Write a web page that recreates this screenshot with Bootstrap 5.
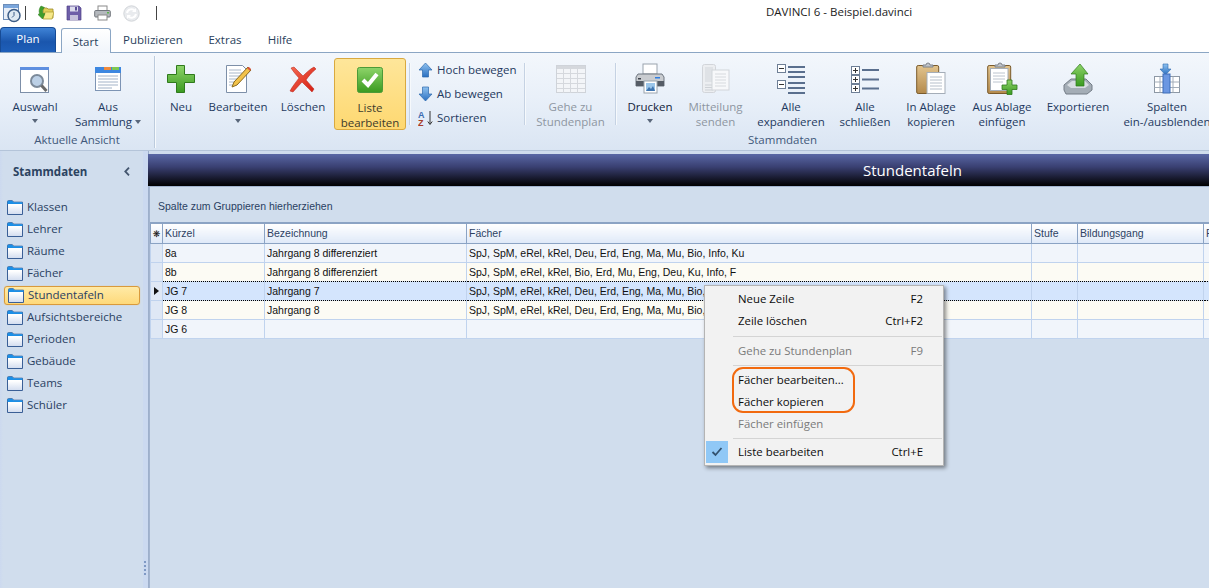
<!DOCTYPE html>
<html lang="de"><head><meta charset="utf-8"><title>DAVINCI 6</title>
<link href="https://cdn.jsdelivr.net/npm/bootstrap@5.3.0/dist/css/bootstrap.min.css" rel="stylesheet">
<script src="https://cdn.jsdelivr.net/npm/bootstrap@5.3.0/dist/js/bootstrap.bundle.min.js"></script>
<style>
html,body{height:100%}
body{width:1209px;height:588px;overflow:hidden;background:#fff;font-family:"Open Sans","Noto Sans",sans-serif;font-size:11.5px;color:#1f3a60;position:relative}
.qat{height:28px;padding:0 0 2px 2px}
.qsep{width:1px;height:14px;background:#444}
.qs1{margin-left:-5px}
.wintitle{position:absolute;left:0;right:0;top:4px;font-size:11.5px;color:#1c1c1c;padding-left:766px;line-height:16px}
.tabrow{height:25px;font-size:11.5px}
.tplan{width:56px;height:26px;background:linear-gradient(#3f83d6,#1a56ad 55%,#1f60ba);border:1px solid #174b95;border-bottom:0;border-radius:4px 4px 0 0;color:#fff;text-align:center;line-height:21px}
.tstart{width:50px;height:25px;margin-left:5px;background:linear-gradient(#fff,#f0f5fb);border:1px solid #8ba6c4;border-bottom:0;border-radius:3px 3px 0 0;text-align:center;line-height:26px;position:relative;z-index:2;color:#2a3f5c;padding-right:1px}
.tplain{text-align:center;line-height:26px;color:#2a3f5c}
.tw1{width:84px}.tw2{width:60px}.tw3{width:50px}
.ribbon{height:99px;border-top:1px solid #8ba6c4;background:linear-gradient(#f3f7fc,#e9f0f9 45%,#dae5f3);border-bottom:1px solid #b4c4d9;overflow:hidden;margin-top:-1px;position:relative}
.rgroup{flex:0 0 auto;height:100%;position:relative}
.g1{width:154px}.g2{width:1253px}
.gedge{width:2px;height:92px;margin-top:3px;background:linear-gradient(90deg,#bccbdd 50%,#f7fafd 50%);flex:0 0 auto}
.rbtn{flex:0 0 auto;height:72px;margin-top:5px;text-align:center;line-height:15px;display:flex;flex-direction:column;align-items:center}
.ibox{height:41px;display:flex;align-items:center;justify-content:center;flex:0 0 auto}
.rbtn.off{color:#8e96a1}
.rbtn.dark{color:#12233b}
.rbtn.on{background:linear-gradient(#fee69a,#fed871);border:1px solid #d9a93f;border-radius:3px;color:#3c3a2c}
.w46{width:46px}.w62{width:62px}.w65{width:65px}.w66{width:66px}.w68{width:68px}.w70{width:70px}.w72{width:72px}.w76{width:76px}.w80{width:80px}.w86{width:86px}.w89{width:89px}.w98{width:98px}
.gname{position:absolute;left:0;right:0;top:79px;text-align:center;line-height:16px;color:#41587a}
.rsep{width:2px;height:62px;margin-top:10px;background:linear-gradient(90deg,#c5d2e3 50%,#f6f9fc 50%);flex:0 0 auto}
.gap2{margin-left:2px}
.gap3{margin-left:3px}
.minicol{width:113px;padding:5px 0 0 7px;flex:0 0 auto}
.mini{height:24px;line-height:20px;display:flex;gap:4px;align-items:center}
.tri{display:block;width:0;height:0;border:3.5px solid transparent;border-top:4px solid #59667a;border-bottom:0;margin:5px auto 0}
.tri.inl{display:inline-block;margin:0 0 2px 3px}
.mainrow{height:437px;background:#d0dded}
.side{width:149px;flex:0 0 auto;position:relative;background:linear-gradient(90deg,#ccd9ef 0,#d0dded 3px)}
.sidehead{height:41px;padding:8px 19px 0 13px;font-weight:700;font-size:11.5px;line-height:18px;color:#2c4361}
.sideitem{height:22px;display:flex;align-items:center;gap:4px;padding-left:7px;font-size:11.5px;line-height:16px;color:#2a3f62}
.sideitem.act{margin:1.5px 9px 1.5px 4px;padding-left:3px;background:linear-gradient(#ffeaa6,#fed97a);border:1px solid #d99a3c;border-radius:3px;height:19px;box-shadow:0 0 1px #e4b765}
.splitter{position:absolute;right:0;top:0;bottom:0;width:6px;background:#cbd9f0;border-right:1px solid #9dafcb}
.gripdot{position:absolute;left:1px;top:410px;width:2px;height:2px;background:#7f99c4;box-shadow:0 4px 0 #7f99c4,0 8px 0 #7f99c4,0 12px 0 #7f99c4}
.content{flex:1 1 auto;min-width:0;overflow:hidden;margin-left:-1px}
.band{height:32px;background:linear-gradient(#5a68a5,#3a4072 40%,#000);color:#fff;font-size:15px;line-height:32px;text-align:center;padding-left:468px;position:relative;z-index:3;margin-top:3px;white-space:nowrap}
.panelwrap{height:402px;overflow:hidden;border-top:1px solid #a3b4cf;margin-left:1px;border-left:1px solid #a3b4cf}
.grouphint{height:35px;padding:11px 0 0 8px;font:10.5px/16px "Liberation Sans",sans-serif;color:#2a3f62}
.table.gridtbl{table-layout:fixed;width:1260px;margin:0;border-collapse:collapse;font:10.5px/14px "Liberation Sans",sans-serif;border-top:2px solid #8ba3c4}
.table.gridtbl>:not(caption)>*>*{padding:0 2px;height:19px;border:1px solid #c0d3ee;box-shadow:none;white-space:nowrap;overflow:hidden;color:#111;background:#f1f5fb;vertical-align:middle}
.table.gridtbl>thead>*>*{height:20px;background:linear-gradient(#fff,#dfe9f8);border:1px solid #8ba3c4;border-top:0;font-weight:400;color:#2d4263}
.table.gridtbl>tbody>.ry>*{background:#fcfbf4}
.table.gridtbl>tbody>.rs>*{background:#d4e5fd;border-top:1px dotted #000;border-bottom:1px dotted #000}
.table.gridtbl>tbody>tr:has(+.rs)>*{border-bottom:0}
.table.gridtbl>tbody>.rs+tr>*{border-top:0}
.table.gridtbl>thead>*>.ind{padding:0;text-align:center}
.table.gridtbl>tbody>*>.ind,.table.gridtbl>tbody>.rs>.ind,.table.gridtbl>tbody>.ry>.ind{background:#dfe8f5;padding:0;text-align:center;border:1px solid #c0d3ee}
.starmark{font:9px/12px "DejaVu Sans",sans-serif;color:#111}
.c0{width:12px}.c1{width:102px}.c2{width:202px}.c3{width:565px}.c4{width:46px}.c5{width:126px}.c6{width:207px}
.ctx{position:absolute;left:704px;top:285px;width:240px;height:181px;background:#f2f2f2;border:1px solid #b4b4b4;box-shadow:2px 2px 4px rgba(0,0,0,.45);color:#0c0c0c;font-size:11.4px;z-index:5;padding-top:2px}
.ci{height:22px;line-height:22px;padding:0 20px 0 33px;display:flex;justify-content:space-between;position:relative}
.ci.dis{color:#7a7a7a}
.csep{height:1px;background:#d4d4d4;margin:3.5px 1px 3.5px 28px}
.csep2{margin:3px 1px 3px 28px}
.csep3{margin:3px 1px 2px 28px}
.chk{position:absolute;left:1px;top:0;width:22px;height:22px;background:#90c8f6;display:flex;align-items:center;justify-content:center}
.mark-oval{position:absolute;left:732px;top:367px;width:123px;height:46px;border:2px solid #f26a0f;border-radius:11px;z-index:6}
</style></head>
<body>
<svg width="0" height="0" class="position-absolute"><defs>
<symbol id="fold" viewBox="0 0 16 15"><path d="M.5 3V1.500Q.5.700 1.300.700H5Q6 .700 6.300 2.200H15.500V14.500H.5Z" fill="#fff" stroke="#3a5f96"/><path d="M.5 3V1.500Q.5.700 1.300.700H5Q6 .700 6.300 2.200H15.500V4H.5Z" fill="#1c8fe6"/><path d="M1 5h14v9H1z" fill="url(#fg)"/></symbol>
<linearGradient id="fg" x1="0" y1="0" x2="0" y2="1"><stop offset="0" stop-color="#fff"/><stop offset="1" stop-color="#d4def0"/></linearGradient>
<linearGradient id="gg" x1="0" y1="0" x2="0" y2="1"><stop offset="0" stop-color="#8ed46a"/><stop offset="1" stop-color="#3a9a20"/></linearGradient>
<linearGradient id="rg" x1="0" y1="0" x2="1" y2="1"><stop offset="0" stop-color="#f56a52"/><stop offset="1" stop-color="#d41a10"/></linearGradient>
<linearGradient id="bg" x1="0" y1="0" x2="0" y2="1"><stop offset="0" stop-color="#8fc2f0"/><stop offset="1" stop-color="#2a6fc0"/></linearGradient>
<linearGradient id="tg" x1="0" y1="0" x2="0" y2="1"><stop offset="0" stop-color="#e2c48e"/><stop offset="1" stop-color="#b48a4c"/></linearGradient>
</defs></svg>

<div class="qat d-flex align-items-center gap-2">
<svg width="20" height="20" viewBox="0 0 20 20"><rect x="1.500" y="1.500" width="15" height="15" fill="#e8eef7" stroke="#6d8db8"/><rect x="2" y="2" width="14" height="3" fill="#7aa6dc"/><circle cx="12" cy="12.500" r="6" fill="#dfe9f2" stroke="#3c5c86" stroke-width="1.500"/><path d="M12 9v3.500l-2 2" stroke="#3c5c86" fill="none"/></svg>
<span class="qsep qs1"></span>
<svg class="ms-1" width="16" height="16" viewBox="0 0 16 16"><path d="M5 3h4l1 1h5v9H5z" fill="#e3cf5a" stroke="#9c8a2a" stroke-width=".8"/><path d="M5 14l2-7h9l-2 7z" fill="#f6e88a" stroke="#b3a23a" stroke-width=".8"/><path d="M3 1c-1.500 2-2.500 4.500-1.500 7.500L0 9.500 4.500 14 7 8.500l-2 .3C4 6.500 4.500 4 6.500 2.500z" fill="#3f9e2c" stroke="#2b7a1c" stroke-width=".5"/></svg>
<svg class="ms-1" width="16" height="16" viewBox="0 0 16 16"><path d="M1 1h12l2 2v12H1z" fill="#6e5fa8" stroke="#4d4188" stroke-width=".7"/><rect x="4" y="1.500" width="8" height="5" fill="#dcdcec"/><rect x="4" y="10" width="8" height="5" fill="#c6c2dc"/><rect x="9" y="2" width="2" height="3.500" fill="#5a4e96"/></svg>
<svg class="ms-1" width="17" height="16" viewBox="0 0 17 16"><rect x="4" y="1" width="9" height="5" fill="#fff" stroke="#8a8a8a"/><rect x=".7" y="5.500" width="15.600" height="6.500" rx="1" fill="#b4b8bd" stroke="#71767c"/><rect x="4" y="10" width="9" height="5" fill="#fff" stroke="#8a8a8a"/><rect x="13" y="7" width="2" height="1.500" fill="#59b34a"/></svg>
<svg class="ms-1" width="17" height="17" viewBox="0 0 17 17"><circle cx="8.500" cy="8.500" r="7.700" fill="#e9ebee" stroke="#d2d5d9"/><path d="M4 8a4.500 4.500 0 0 1 8-2M13 9a4.500 4.500 0 0 1-8 2" stroke="#fff" stroke-width="2" fill="none"/><path d="M13 3v4h-4zM4 14v-4h4z" fill="#fff"/></svg>
<span class="qsep ms-2"></span>
</div>
<div class="wintitle">DAVINCI 6 - Beispiel.davinci</div>

<div class="tabrow d-flex align-items-end">
<div class="tplan">Plan</div>
<div class="tstart">Start</div>
<div class="tplain tw1">Publizieren</div>
<div class="tplain tw2">Extras</div>
<div class="tplain tw3">Hilfe</div>
</div>

<div class="ribbon d-flex">
<div class="rgroup g1 d-flex">
 <div class="rbtn w70"><div class="ibox"><svg width="32" height="30" viewBox="0 0 32 30"><rect x="1.500" y="3.500" width="28" height="25" fill="#fff" stroke="#7d8fa8"/><rect x="1" y="3" width="29" height="3" fill="#5e8fe0"/><circle cx="18" cy="17" r="6" fill="#bcd0e6" stroke="#7c8a9a" stroke-width="2"/><path d="M22.500 21.500l5 5.500" stroke="#6a6a6a" stroke-width="3"/></svg></div>Auswahl<span class="tri"></span></div>
 <div class="rbtn w76"><div class="ibox"><svg width="28" height="28" viewBox="0 0 28 28"><rect x="1.500" y="2.500" width="25" height="23" fill="#fff" stroke="#7d94b4"/><rect x="1" y="2" width="26" height="4" fill="#3d87e0"/><rect x="10" y="2" width="7" height="3" fill="#f08a3c"/><rect x="18" y="2" width="7" height="3" fill="#7ec850"/><rect x="1" y="6" width="26" height="2" fill="#3d87e0"/><path d="M4 11h20M4 14h20M4 17h20M4 20h20M4 23h14" stroke="#a3b3c8"/></svg></div>Aus<div>Sammlung<span class="tri inl"></span></div></div>
 <div class="gname">Aktuelle Ansicht</div>
</div>
<div class="gedge"></div>
<div class="rgroup g2 d-flex">
 <div class="gname">Stammdaten</div>
 <div class="rbtn w46 gap2"><div class="ibox"><svg width="30" height="30" viewBox="0 0 30 30"><path d="M10.500 1.500h8v9h10v8h-10v10h-8v-10h-9v-8h9z" fill="url(#gg)" stroke="#2f7a1c"/></svg></div>Neu</div>
 <div class="rbtn w68"><div class="ibox"><svg width="28" height="30" viewBox="0 0 28 30"><path d="M2.500 1.500h16l4 4v23h-20z" fill="#fff" stroke="#7d8fa8"/><path d="M5 6h12M5 9h13M5 12h13M5 15h10M5 18h8M5 21h6" stroke="#a9b7ca"/><path d="M24 3l3 3-14 15-5 2 2-5z" fill="#f2c24a" stroke="#8a6a20"/><path d="M23 4l3 3 1-2-2-2z" fill="#d9533e"/></svg></div>Bearbeiten<span class="tri"></span></div>
 <div class="rbtn w62"><div class="ibox"><svg width="28" height="28" viewBox="0 0 28 28"><path d="M2 3l3-1c3 3 6 6 9 9 3-3 7-7 11-9l2 2c-4 3-8 8-10 11 3 3 6 7 8 9l-2 3c-3-3-7-7-10-10-3 3-6 7-9 10l-3-1c2-4 6-9 9-13C7 10 4 6 2 3z" fill="url(#rg)" stroke="#b61c10" stroke-width=".5"/></svg></div>Löschen</div>
 <div class="rbtn on w72"><div class="ibox"><svg width="28" height="28" viewBox="0 0 28 28"><rect x="1.500" y="1.500" width="25" height="25" rx="2" fill="url(#gg)" stroke="#4c9a38"/><path d="M7 14l5 5 9-11" stroke="#fff" stroke-width="4" fill="none"/></svg></div>Liste<div>bearbeiten</div></div>
 <div class="rsep gap3"></div>
 <div class="minicol">
  <div class="mini"><svg width="15" height="16" viewBox="0 0 15 16"><path d="M7.500 1L14 8h-3.500v7h-6V8H1z" fill="url(#bg)" stroke="#2d68ae" stroke-width=".7"/></svg>Hoch bewegen</div>
  <div class="mini"><svg width="15" height="16" viewBox="0 0 15 16"><path d="M7.500 15L14 8h-3.500V1h-6v7H1z" fill="url(#bg)" stroke="#2d68ae" stroke-width=".7"/></svg>Ab bewegen</div>
  <div class="mini"><svg width="15" height="16" viewBox="0 0 15 16"><text x="0" y="7.500" font-family="Liberation Sans" font-weight="700" font-size="9" fill="#3b6bb0">A</text><text x="0" y="15.500" font-family="Liberation Sans" font-weight="700" font-size="9" fill="#a83c28">Z</text><path d="M12 1v13M9.800 11.500l2.200 3 2.200-3" stroke="#333" fill="none"/></svg>Sortieren</div>
 </div>
 <div class="rsep"></div>
 <div class="rbtn off w89"><div class="ibox"><svg width="30" height="28" viewBox="0 0 30 28"><rect x=".5" y=".5" width="29" height="27" fill="#f3f5f8" stroke="#cfd3d9"/><rect x="1" y="1" width="28" height="3" fill="#d5d8dd"/><path d="M1 8.500h28M1 13.500h28M1 18.500h28M1 23.500h28M7.500 4v24M14.500 4v24M21.500 4v24" stroke="#d5d8dd"/></svg></div>Gehe zu<div>Stundenplan</div></div>
 <div class="rsep"></div>
 <div class="rbtn dark w66"><div class="ibox"><svg width="30" height="31" viewBox="0 0 30 31"><rect x="8" y="1" width="14" height="10" fill="#fff" stroke="#9aa3ad"/><path d="M3 11h24l2 3v9H1v-9z" fill="#c9ccd0" stroke="#6f7680"/><rect x="1" y="18" width="28" height="5" fill="#555c66"/><rect x="3" y="15" width="3" height="1.500" fill="#3d424a"/><rect x="20" y="14" width="5" height="1.500" fill="#2e7de0"/><rect x="9" y="18" width="13" height="12" fill="#fff" stroke="#9aa3ad"/><rect x="11" y="20" width="9" height="8" fill="#9cc6ea"/><path d="M11 28l3-4 2 2 2-3 2 5z" fill="#3f75b0"/></svg></div>Drucken<span class="tri"></span></div>
 <div class="rbtn off w65"><div class="ibox"><svg width="28" height="30" viewBox="0 0 28 30"><rect x=".5" y=".5" width="13" height="28" rx="2" fill="#eceef1" stroke="#d2d5da"/><path d="M3 3h8v15H3z" fill="#dfe2e6"/><path d="M3 21h8M3 23.500h8M3 26h8" stroke="#cdd1d6"/><rect x="10" y="6" width="17" height="20" fill="#f7f8fa" stroke="#d2d5da"/><path d="M13 10h11M13 13h11M13 16h11M13 19h11M13 22h11" stroke="#d7dade"/></svg></div>Mitteilung<div>senden</div></div>
 <div class="rbtn w86"><div class="ibox"><svg width="28" height="30" viewBox="0 0 28 30"><rect x=".5" y=".5" width="8" height="8" fill="#fff" stroke="#6e7f96"/><path d="M2 4.500h5" stroke="#333"/><path d="M11 3h17M11 8h17M11 13h17" stroke="#5a6f8e" stroke-width="2"/><rect x=".5" y="16.500" width="8" height="8" fill="#fff" stroke="#6e7f96"/><path d="M2 20.500h5" stroke="#333"/><path d="M11 19h17M11 24h17M11 29h17" stroke="#5a6f8e" stroke-width="2"/></svg></div>Alle<div>expandieren</div></div>
 <div class="rbtn w62"><div class="ibox"><svg width="28" height="28" viewBox="0 0 28 28"><g fill="#fff" stroke="#6e7f96"><rect x=".5" y="1.500" width="8" height="8"/><rect x=".5" y="10.500" width="8" height="8"/><rect x=".5" y="19.500" width="8" height="8"/></g><path d="M2 5.500h5M4.500 3v5M2 14.500h5M4.500 12v5M2 23.500h5M4.500 21v5" stroke="#333"/><path d="M11 5h17M11 14.500h17M11 23.500h17" stroke="#5a6f8e" stroke-width="2"/></svg></div>Alle<div>schließen</div></div>
 <div class="rbtn w70"><div class="ibox"><svg width="30" height="33" viewBox="0 0 30 33"><rect x=".7" y="3.500" width="22" height="28" rx="1.500" fill="url(#tg)" stroke="#7a5a2a"/><path d="M7 5V3h3a2 2 0 0 1 4 0h3v2z" fill="#bfc3c9" stroke="#7d8289"/><rect x="11" y="10.500" width="18" height="21" fill="#fff" stroke="#a4adb8"/><path d="M14 15h12M14 18h12M14 21h12M14 24h12M14 27h12" stroke="#b6bfca"/></svg></div>In Ablage<div>kopieren</div></div>
 <div class="rbtn w72"><div class="ibox"><svg width="31" height="33" viewBox="0 0 31 33"><rect x=".7" y="3.500" width="23" height="28" rx="1.500" fill="url(#tg)" stroke="#7a5a2a"/><rect x="3.500" y="6.500" width="17.500" height="22" fill="#fff" stroke="#a4adb8"/><path d="M6 11h12M6 14h12M6 17h12M6 20h10" stroke="#bcc4ce"/><path d="M8 5V3h3a2 2 0 0 1 4 0h3v2z" fill="#bfc3c9" stroke="#7d8289"/><path d="M20 18h5v5h5v4.500h-5v5h-5v-5h-5V23h5z" fill="url(#gg)" stroke="#2f7a1c" stroke-width=".8"/></svg></div>Aus Ablage<div>einfügen</div></div>
 <div class="rbtn w80"><div class="ibox"><svg width="30" height="32" viewBox="0 0 30 32"><path d="M1 22l7-6h15l6 6v5l-5 4H3l-2-4z" fill="#a4adb6" stroke="#747d87"/><path d="M4 22l5-4h13l4 4-4 3H8z" fill="#d8dde2"/><path d="M17 1l8 10h-4v12h-8V11H8z" fill="url(#gg)" stroke="#2f7a1c" stroke-width=".7"/></svg></div>Exportieren</div>
 <div class="rbtn w98"><div class="ibox"><svg width="26" height="31" viewBox="0 0 26 31"><path d="M9 1h5v5h3l-5.500 6L6 6h3z" fill="url(#bg)" stroke="#2d68ae" stroke-width=".6"/><rect x=".5" y="13.500" width="25" height="16" fill="#fff" stroke="#8d98a5"/><path d="M.5 19h25M.5 24.500h25M6 13.500v16M19 13.500v16" stroke="#a3adb9"/><rect x="9" y="11" width="7" height="19" fill="#6b97e2" stroke="#3d6cb8"/></svg></div>Spalten<div class="text-nowrap">ein-/ausblenden</div></div>
</div>
</div>

<div class="mainrow d-flex">
<aside class="side">
 <div class="sidehead d-flex justify-content-between align-items-start mt-1"><span>Stammdaten</span><svg class="mt-1" width="6" height="9" viewBox="0 0 6 9"><path d="M5 .700L1.300 4.500 5 8.300" stroke="#44566f" stroke-width="1.800" fill="none"/></svg></div>
 <div class="sideitem"><svg width="16" height="15"><use href="#fold"/></svg>Klassen</div>
 <div class="sideitem"><svg width="16" height="15"><use href="#fold"/></svg>Lehrer</div>
 <div class="sideitem"><svg width="16" height="15"><use href="#fold"/></svg>Räume</div>
 <div class="sideitem"><svg width="16" height="15"><use href="#fold"/></svg>Fächer</div>
 <div class="sideitem act"><svg width="16" height="15"><use href="#fold"/></svg>Stundentafeln</div>
 <div class="sideitem"><svg width="16" height="15"><use href="#fold"/></svg>Aufsichtsbereiche</div>
 <div class="sideitem"><svg width="16" height="15"><use href="#fold"/></svg>Perioden</div>
 <div class="sideitem"><svg width="16" height="15"><use href="#fold"/></svg>Gebäude</div>
 <div class="sideitem"><svg width="16" height="15"><use href="#fold"/></svg>Teams</div>
 <div class="sideitem"><svg width="16" height="15"><use href="#fold"/></svg>Schüler</div>
 <div class="splitter"><span class="gripdot"></span></div>
</aside>
<section class="content">
 <div class="band">Stundentafeln</div>
 <div class="panelwrap">
 <div class="grouphint">Spalte zum Gruppieren hierherziehen</div>
 <table class="table gridtbl">
 <colgroup><col class="c0"><col class="c1"><col class="c2"><col class="c3"><col class="c4"><col class="c5"><col class="c6"></colgroup>
 <thead><tr><th class="ind"><span class="starmark">❋</span></th><th>Kürzel</th><th>Bezeichnung</th><th>Fächer</th><th>Stufe</th><th>Bildungsgang</th><th>F</th></tr></thead>
 <tbody>
 <tr><td class="ind"></td><td>8a</td><td>Jahrgang 8 differenziert</td><td>SpJ, SpM, eRel, kRel, Deu, Erd, Eng, Ma, Mu, Bio, Info, Ku</td><td></td><td></td><td></td></tr>
 <tr class="ry"><td class="ind"></td><td>8b</td><td>Jahrgang 8 differenziert</td><td>SpJ, SpM, eRel, kRel, Bio, Erd, Mu, Eng, Deu, Ku, Info, F</td><td></td><td></td><td></td></tr>
 <tr class="rs"><td class="ind"><svg width="5" height="8" viewBox="0 0 5 8" class="d-block mx-auto"><path d="M0 0l5 4-5 4z" fill="#111"/></svg></td><td>JG 7</td><td>Jahrgang 7</td><td>SpJ, SpM, eRel, kRel, Deu, Erd, Eng, Ma, Mu, Bio, Info, Ku</td><td></td><td></td><td></td></tr>
 <tr class="ry"><td class="ind"></td><td>JG 8</td><td>Jahrgang 8</td><td>SpJ, SpM, eRel, kRel, Deu, Erd, Eng, Ma, Mu, Bio, Info, Ku</td><td></td><td></td><td></td></tr>
 <tr><td class="ind"></td><td>JG 6</td><td></td><td></td><td></td><td></td><td></td></tr>
 </tbody></table>
 </div>
</section>
</div>

<div class="ctx">
 <div class="ci"><span>Neue Zeile</span><span>F2</span></div>
 <div class="ci"><span>Zeile löschen</span><span>Ctrl+F2</span></div>
 <div class="csep"></div>
 <div class="ci dis"><span>Gehe zu Stundenplan</span><span>F9</span></div>
 <div class="csep csep2"></div>
 <div class="ci"><span>Fächer bearbeiten...</span></div>
 <div class="ci"><span>Fächer kopieren</span></div>
 <div class="ci dis"><span>Fächer einfügen</span></div>
 <div class="csep csep3"></div>
 <div class="ci"><span class="chk"><svg width="12" height="10" viewBox="0 0 12 10"><path d="M1.500 5l3 3 6-7" stroke="#33526f" stroke-width="1.800" fill="none"/></svg></span><span>Liste bearbeiten</span><span>Ctrl+E</span></div>
</div>
<div class="mark-oval"></div>
</body></html>
